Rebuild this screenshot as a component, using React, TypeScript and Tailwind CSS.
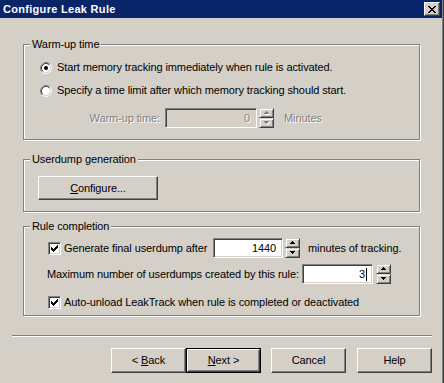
import type { ReactNode } from 'react'

// classic win32 bevels
const raised =
  'border border-t-white border-l-white border-r-[#404040] border-b-[#404040] bg-[#d4d0c8] shadow-[inset_-1px_-1px_0_#808080]'
const spinBevel =
  'border border-t-[#d4d0c8] border-l-[#d4d0c8] border-r-[#404040] border-b-[#404040] bg-[#d4d0c8] shadow-[inset_1px_1px_0_#ffffff,inset_-1px_-1px_0_#808080]'
const sunken =
  'border border-t-[#808080] border-l-[#808080] border-r-white border-b-white shadow-[inset_1px_1px_0_#404040,inset_-1px_-1px_0_#d4d0c8]'
const dim = 'text-[#808080] [text-shadow:1px_1px_0_#ffffff]'

function Group({ title, className, children }: { title: string; className: string; children?: ReactNode }) {
  return (
    <div className={`relative w-[397px] border border-[#808080] shadow-[inset_1px_1px_0_#ffffff,1px_1px_0_#ffffff] ${className}`}>
      <span className="absolute left-[6px] top-[-7px] bg-[#d4d0c8] px-[2px] leading-[13px]">{title}</span>
      {children}
    </div>
  )
}

function Radio({ checked }: { checked?: boolean }) {
  return (
    <svg width="12" height="12" viewBox="0 0 12 12" className="shrink-0">
      <circle cx="6" cy="6" r="4.5" fill="#ffffff" />
      <path d="M2.11 9.89 A5.5 5.5 0 0 1 9.89 2.11" fill="none" stroke="#808080" />
      <path d="M9.89 2.11 A5.5 5.5 0 0 1 2.11 9.89" fill="none" stroke="#ffffff" />
      <path d="M2.82 9.18 A4.5 4.5 0 0 1 9.18 2.82" fill="none" stroke="#404040" />
      <path d="M9.18 2.82 A4.5 4.5 0 0 1 2.82 9.18" fill="none" stroke="#d4d0c8" />
      {checked && <circle cx="6" cy="6" r="2" fill="#000000" />}
    </svg>
  )
}

function Check() {
  return (
    <div className={`flex h-[13px] w-[13px] shrink-0 items-center justify-center bg-white ${sunken}`}>
      <svg width="11" height="11" viewBox="0 0 11 11">
        <path d="M2 4h1v3H2zM3 5h1v3H3zM4 6h1v3H4zM5 5h1v3H5zM6 4h1v3H6zM7 3h1v3H7zM8 2h1v3H8z" fill="#000000" />
      </svg>
    </div>
  )
}

function Arrow({ down, disabled }: { down?: boolean; disabled?: boolean }) {
  const d = down ? 'M0 0h5v1H0zM1 1h3v1H1zM2 2h1v1H2z' : 'M2 0h1v1H2zM1 1h3v1H1zM0 2h5v1H0z'
  return (
    <svg width="6" height="4" viewBox="0 0 6 4">
      {disabled && <path d={d} fill="#ffffff" transform="translate(1 1)" />}
      <path d={d} fill={disabled ? '#808080' : '#000000'} />
    </svg>
  )
}

function Spin({ disabled, className }: { disabled?: boolean; className: string }) {
  return (
    <div className={`flex h-[20px] w-[15px] shrink-0 flex-col ${className}`}>
      <div className={`flex h-[10px] items-center justify-center pl-[1px] ${spinBevel}`}>
        <Arrow disabled={disabled} />
      </div>
      <div className={`flex h-[10px] items-center justify-center pl-[1px] ${spinBevel}`}>
        <Arrow down disabled={disabled} />
      </div>
    </div>
  )
}

function Button({ children, isDefault, className = '' }: { children: ReactNode; isDefault?: boolean; className?: string }) {
  if (isDefault) {
    return (
      <div className={`h-[25px] w-[75px] border border-black ${className}`}>
        <div className={`flex h-full items-center justify-center ${raised}`}>{children}</div>
      </div>
    )
  }
  return <div className={`flex h-[25px] w-[75px] items-center justify-center ${raised} ${className}`}>{children}</div>
}

export default function App() {
  return (
    <div className="h-[383px] w-[444px] whitespace-nowrap border-r border-[#404040] bg-[#d4d0c8] font-['Liberation_Sans',Arial,sans-serif] text-[11px] tracking-[-0.1px] text-black">
      <div className="flex h-full flex-col border-r border-[#808080]">
        {/* caption */}
        <div className="flex h-[18px] items-center justify-between bg-[#0a246a] pl-[3px] pr-[2px]">
          <span className="text-[11px] font-bold tracking-[0.3px] text-white">Configure Leak Rule</span>
          <div className={`flex h-[14px] w-[16px] items-center justify-center ${raised}`}>
            <svg width="8" height="7" viewBox="0 0 8 7">
              <path
                d="M0 0h2v1H0zM6 0h2v1H6zM1 1h2v1H1zM5 1h2v1H5zM2 2h4v1H2zM3 3h2v1H3zM2 4h4v1H2zM1 5h2v1H1zM5 5h2v1H5zM0 6h2v1H0zM6 6h2v1H6z"
                fill="#000000"
              />
            </svg>
          </div>
        </div>

        <div className="pl-[23px] pt-[26px]">
          <Group title="Warm-up time" className="h-[96px] pl-[16px] pt-[11px]">
            <div className="flex h-[23px] items-center gap-[5px]">
              <Radio checked />
              <span>Start memory tracking immediately when rule is activated.</span>
            </div>
            <div className="flex h-[23px] items-center gap-[5px]">
              <Radio />
              <span>Specify a time limit after which memory tracking should start.</span>
            </div>
            <div className="mt-[6px] flex items-center">
              <span className={`w-[120px] shrink-0 text-right ${dim}`}>Warm-up time:</span>
              <div className={`ml-[5px] flex h-[20px] w-[92px] shrink-0 items-center justify-end bg-[#d4d0c8] pr-[6px] ${sunken} ${dim}`}>0</div>
              <Spin disabled className="ml-[2px]" />
              <span className={`ml-[10px] ${dim}`}>Minutes</span>
            </div>
          </Group>

          <Group title="Userdump generation" className="mt-[19px] h-[53px] pl-[14px] pt-[16px]">
            <div className={`flex h-[24px] w-[120px] items-center justify-center ${raised}`}>
              <span>
                <span className="underline">C</span>onfigure...
              </span>
            </div>
          </Group>

          <Group title="Rule completion" className="mt-[14px] h-[90px] pl-[24px] pt-[11px]">
            <div className="flex h-[20px] items-center">
              <Check />
              <span className="ml-[3px] w-[149px] shrink-0">Generate final userdump after</span>
              <div className={`flex h-[20px] w-[70px] shrink-0 items-center justify-end bg-white pr-[6px] ${sunken}`}>1440</div>
              <Spin className="ml-[2px]" />
              <span className="ml-[8px]">minutes of tracking.</span>
            </div>
            <div className="-ml-[1px] mt-[6px] flex h-[20px] items-center">
              <span className="w-[255px] shrink-0">Maximum number of userdumps created by this rule:</span>
              <div className={`flex h-[20px] w-[71px] shrink-0 items-center justify-end bg-white pr-[5px] ${sunken}`}>
                3<span className="ml-[1px] inline-block h-[13px] w-px bg-black" />
              </div>
              <Spin className="ml-[3px]" />
            </div>
            <div className="mt-[8px] flex h-[20px] items-center">
              <Check />
              <span className="ml-[3px]">Auto-unload LeakTrack when rule is completed or deactivated</span>
            </div>
          </Group>
        </div>

        <div className="ml-[12px] mt-[19px] h-[2px] w-[420px] border-t border-b border-t-[#808080] border-b-white" />

        <div className="ml-[111px] mt-[11px] flex">
          <Button>
            <span>
              &lt; <span className="underline">B</span>ack
            </span>
          </Button>
          <Button isDefault>
            <span>
              <span className="underline">N</span>ext &gt;
            </span>
          </Button>
          <Button className="ml-[10px]">Cancel</Button>
          <Button className="ml-[11px]">Help</Button>
        </div>
      </div>
    </div>
  )
}
